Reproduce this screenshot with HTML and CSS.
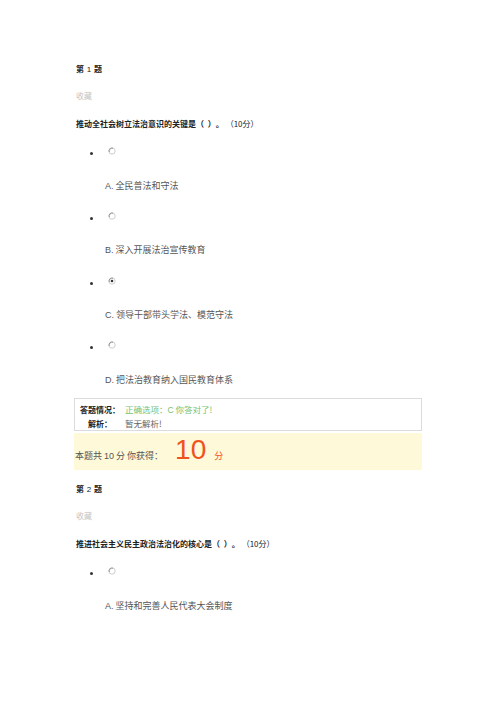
FILE: index.html
```html
<!DOCTYPE html>
<html lang="zh">
<head>
<meta charset="utf-8">
<link rel="stylesheet" href="styles.css">
</head>
<body>
<div class="page">
  <section class="q">
    <div class="q-title">第 <span class="num">1</span> 题</div>
    <div class="fav">收藏</div>
    <div class="q-text">推动全社会树立法治意识的关键是（&nbsp;&nbsp;）。<span class="pts">（10分）</span></div>
    <ul class="opts">
      <li>
        <div class="radio-row"><span class="dot"></span><svg class="radio" viewBox="0 0 8 8"><circle cx="4" cy="4" r="3.2" fill="#fff" stroke="#c8c8c8" stroke-width="0.9"/><path d="M1.3 5 A3 3 0 0 1 5 1.2" fill="none" stroke="#8a8a8a" stroke-width="0.9"/></svg></div>
        <div class="opt-text"><span class="lt">A.</span> 全民普法和守法</div>
      </li>
      <li>
        <div class="radio-row"><span class="dot"></span><svg class="radio" viewBox="0 0 8 8"><circle cx="4" cy="4" r="3.2" fill="#fff" stroke="#c8c8c8" stroke-width="0.9"/><path d="M1.3 5 A3 3 0 0 1 5 1.2" fill="none" stroke="#8a8a8a" stroke-width="0.9"/></svg></div>
        <div class="opt-text"><span class="lt">B.</span> 深入开展法治宣传教育</div>
      </li>
      <li>
        <div class="radio-row"><span class="dot"></span><svg class="radio" viewBox="0 0 8 8"><circle cx="4" cy="4" r="3.2" fill="#fff" stroke="#c8c8c8" stroke-width="0.9"/><path d="M1.3 5 A3 3 0 0 1 5 1.2" fill="none" stroke="#8a8a8a" stroke-width="0.9"/><circle cx="4" cy="4" r="1.3" fill="#333"/></svg></div>
        <div class="opt-text"><span class="lt">C.</span> 领导干部带头学法、模范守法</div>
      </li>
      <li>
        <div class="radio-row"><span class="dot"></span><svg class="radio" viewBox="0 0 8 8"><circle cx="4" cy="4" r="3.2" fill="#fff" stroke="#c8c8c8" stroke-width="0.9"/><path d="M1.3 5 A3 3 0 0 1 5 1.2" fill="none" stroke="#8a8a8a" stroke-width="0.9"/></svg></div>
        <div class="opt-text"><span class="lt">D.</span> 把法治教育纳入国民教育体系</div>
      </li>
    </ul>
    <div class="answer">
      <div class="ans-row"><span class="label">答题情况：</span><span class="val ok">正确选项：<span class="lt">C</span> 你答对了!</span></div>
      <div class="ans-row"><span class="label">解析：</span><span class="val">暂无解析!</span></div>
    </div>
    <div class="score">本题共 <span class="lt">10</span> 分 你获得：<span class="big">10</span><span class="fen">分</span></div>
  </section>
  <section class="q q2">
    <div class="q-title">第 <span class="num">2</span> 题</div>
    <div class="fav">收藏</div>
    <div class="q-text">推进社会主义民主政治法治化的核心是（&nbsp;&nbsp;）。<span class="pts">（10分）</span></div>
    <ul class="opts">
      <li>
        <div class="radio-row"><span class="dot"></span><svg class="radio" viewBox="0 0 8 8"><circle cx="4" cy="4" r="3.2" fill="#fff" stroke="#c8c8c8" stroke-width="0.9"/><path d="M1.3 5 A3 3 0 0 1 5 1.2" fill="none" stroke="#8a8a8a" stroke-width="0.9"/></svg></div>
        <div class="opt-text"><span class="lt">A.</span> 坚持和完善人民代表大会制度</div>
      </li>
    </ul>
  </section>
</div>
</body>
</html>
```
FILE: styles.css
```css
html, body {
  margin: 0;
  padding: 0;
  background: #fff;
}
body {
  font-family: "Noto Sans CJK SC", "Liberation Sans", sans-serif;
  color: #333;
}
.page {
  padding: 63px 0 0 76px;
  width: 346px;
}
.q-title {
  font-size: 8px;
  font-weight: bold;
  line-height: 12px;
  height: 12px;
  color: #222;
}
.q-title .num {
  font-family: "Liberation Sans", sans-serif;
  font-weight: normal;
  padding: 0 1px;
}
.fav {
  margin-top: 15px;
  font-size: 8px;
  line-height: 12px;
  height: 12px;
  color: #c4c4c4;
}
.q-text {
  margin-top: 16px;
  font-size: 8px;
  font-weight: bold;
  line-height: 12px;
  height: 12px;
  color: #222;
  white-space: nowrap;
}
.q-text .pts {
  font-weight: normal;
  margin-left: 6px;
  color: #222;
}
.opts {
  list-style: none;
  margin: 16px 0 0 0;
  padding: 0;
}
.opts li {
  margin-bottom: 19.3px;
}
.radio-row {
  display: flex;
  align-items: center;
  height: 12px;
}
.dot {
  width: 3px;
  height: 3px;
  border-radius: 50%;
  background: #333;
  margin-left: 14px;
  margin-top: 3px;
}
.radio {
  width: 8px;
  height: 8px;
  margin-left: 15px;
  margin-top: -2px;
}
.opt-text {
  margin-top: 21.5px;
  padding-left: 29px;
  font-size: 9px;
  line-height: 12px;
  height: 12px;
  color: #555;
  white-space: nowrap;
}
.lt {
  font-family: "Liberation Sans", sans-serif;
}
.answer {
  margin-top: -7px;
  border: 1px solid #dcdcdc;
  height: 28px;
  box-sizing: content-box;
  padding-top: 3px;
  margin-left: -2px;
}
.ans-row {
  display: flex;
  align-items: center;
  height: 14px;
  font-size: 8px;
}
.label {
  width: 50px;
  text-align: center;
  font-weight: bold;
  color: #222;
}
.val {
  color: #666;
  font-size: 8.5px;
}
.val.ok {
  color: #74c374;
}
.score {
  margin-top: 2px;
  margin-left: -2px;
  background: #fef9d8;
  height: 37px;
  box-sizing: border-box;
  padding-top: 2px;
  padding-left: 1px;
  font-size: 9px;
  color: #555;
  line-height: 30px;
  white-space: nowrap;
}
.score .big {
  font-family: "Liberation Sans", sans-serif;
  font-size: 28px;
  color: #f0521c;
  margin-left: 12px;
  vertical-align: baseline;
}
.score .fen {
  color: #f0521c;
  margin-left: 8px;
  font-size: 9px;
}
.q2 {
  margin-top: 13px;
}
```
